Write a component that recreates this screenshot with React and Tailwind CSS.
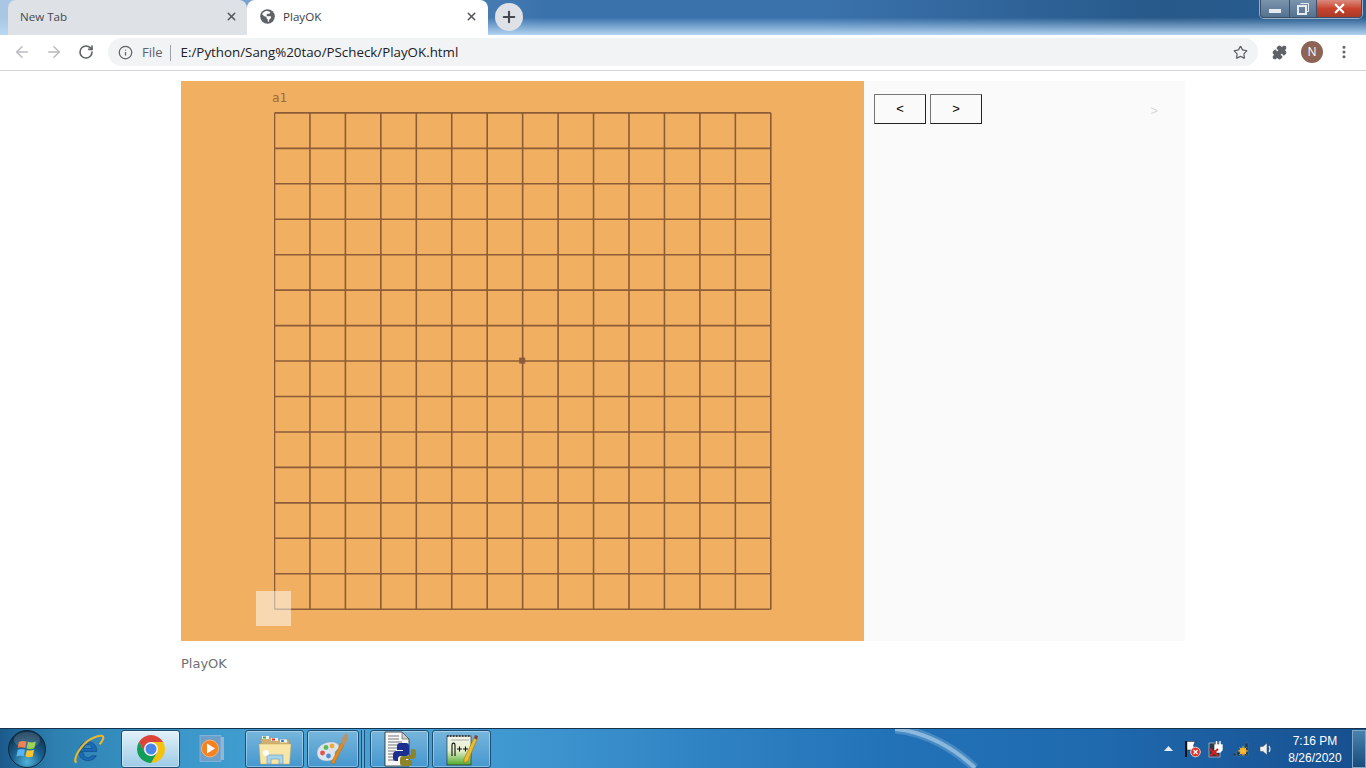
import { ArrowLeft, ArrowRight, RotateCw, Info, Star, Puzzle, X, Plus, EllipsisVertical } from 'lucide-react'

const steps = Array.from({ length: 15 }, (_, i) => i * 35.45)

function Board() {
  return (
    <svg width="498" height="498" className="block">
      {steps.map((s) => (
        <g key={s} stroke="#8c5c38" strokeWidth="1.6">
          <line x1={0.5 + s} y1="0.9" x2={0.5 + s} y2="497.2" />
          <line x1="0.5" y1={0.9 + s} x2="496.8" y2={0.9 + s} />
        </g>
      ))}
      <rect x="245.2" y="245.6" width="6" height="6" fill="#8c5c38" />
    </svg>
  )
}

function GlobeIcon() {
  return (
    <svg width="15" height="15" viewBox="0 0 15 15" className="mr-[8px]">
      <circle cx="7.500" cy="7.500" r="7.300" fill="#5f6368" />
      <path d="M6.700 1.800 4.200 2.800 2 5l2.200 2.300 2.300.4v1.500l1.300 1.200v2.300l1.300-.2V10.800L11 9V7.300H7.500L6.300 6l1.200-1.300h2L10.500 3z" fill="#fff" />
    </svg>
  )
}

function ChromeIcon() {
  return (
    <svg width="30" height="30" viewBox="0 0 30 30">
      <path d="M2.900 8A14 14 0 0 1 27.100 8H15L9 18.500z" fill="#db4437" />
      <path d="M27.100 8A14 14 0 0 1 15 29L21 18.500 15 8z" fill="#f4c20d" />
      <path d="M15 29A14 14 0 0 1 2.900 8L9 18.500H21z" fill="#0f9d58" />
      <circle cx="15" cy="15" r="7" fill="#f4f6f8" />
      <circle cx="15" cy="15" r="5.500" fill="#4a85e8" />
    </svg>
  )
}

function WinOrb() {
  return (
    <svg width="38" height="38" viewBox="0 0 38 38">
      <defs>
        <radialGradient id="orb" cx="50%" cy="85%" r="75%">
          <stop offset="0%" stopColor="#4fb3d9" />
          <stop offset="55%" stopColor="#1c5f8c" />
          <stop offset="100%" stopColor="#0e3350" />
        </radialGradient>
      </defs>
      <circle cx="19" cy="19" r="18.500" fill="url(#orb)" stroke="#0b2a42" />
      <path d="M11 12q3.500-1.800 7.500-.5l-1.300 6.500q-4-1.400-7.700.3z" fill="#ef6a2f" />
      <path d="M20 11.800q3.500 1.500 7.700-.3l-1.300 6.800q-4 1.600-7.700.2z" fill="#8ecb3a" />
      <path d="M9.700 19.800q3.800-1.600 7.300-.2l-1.300 6.700q-3.700-1.400-7.300.3z" fill="#58b4ee" />
      <path d="M18.800 20q3.500 1.300 7.300-.2l-1.300 6.700q-3.800 1.500-7.300.1z" fill="#fbc52e" />
      <ellipse cx="19" cy="10" rx="13" ry="8" fill="#fff" opacity="0.16" />
    </svg>
  )
}

function IeIcon() {
  return (
    <svg width="34" height="34" viewBox="0 0 34 34">
      <path d="M5 19.500h19.500C24.500 13 20.500 9.500 15.500 9.500 9.500 9.500 6 14.500 6 19.500c0 5.500 4 9.500 9.500 9.500 4 0 7-1.800 8.500-5h-5c-.9 1.300-2 2-3.500 2-2.800 0-4.500-2-4.700-5zM10.800 16.500c.4-2.400 2.200-4 4.700-4 2.300 0 4 1.500 4.200 4z" fill="#1a6ab8" stroke="#0b3a6e" strokeWidth="0.5" />
      <path d="M3.500 31C-1 28.500 8 12 19 6.500c8-4 13.500-4.500 12 0-.7 2-2 4-3.500 5.500" fill="none" stroke="#ecb62b" strokeWidth="2.200" />
    </svg>
  )
}

function MediaIcon() {
  return (
    <svg width="30" height="30" viewBox="0 0 30 30">
      <rect x="11" y="3" width="15" height="23" fill="#8fb6d2" />
      <rect x="2" y="1.500" width="21" height="26" fill="#6c9fca" stroke="#9cc0dc" strokeWidth="0.6" />
      <circle cx="12" cy="14.500" r="8.500" fill="#f58220" stroke="#f5b47c" />
      <path d="M9 9.500 17 14.500 9 19.500z" fill="#fff" />
    </svg>
  )
}

function FolderIcon() {
  return (
    <svg width="34" height="32" viewBox="0 0 34 32">
      <path d="M3 5h11l2 2h15v10H3z" fill="#cfb070" stroke="#a98c50" strokeWidth="0.5" />
      <rect x="4" y="3" width="7" height="3" fill="#f4f4f4" />
      <rect x="5" y="3.500" width="3" height="2" fill="#3fae49" />
      <rect x="13" y="5" width="7" height="3" fill="#f4f4f4" />
      <rect x="14" y="5.500" width="3" height="2" fill="#d9342b" />
      <rect x="22" y="6.500" width="7" height="3" fill="#f4f4f4" />
      <rect x="23" y="7" width="3" height="2" fill="#2d8fdd" />
      <path d="M1 11h32l-1.500 20H2.500z" fill="#f7e6a8" stroke="#c9a95c" strokeWidth="0.5" />
      <path d="M9 31v-9h16v9h-4v-5h-8v5z" fill="#a8d4ea" stroke="#5f97bc" strokeWidth="0.6" />
      <circle cx="8" cy="20" r="3" fill="#fff" opacity="0.9" />
    </svg>
  )
}

function PaletteIcon() {
  return (
    <svg width="34" height="34" viewBox="0 0 34 34">
      <path d="M1 21c0-6 6-11 14-11 5 0 8 2 8 5 0 3-4 3-4 6 0 2 2 3 0 5-2 2-5 3-8 3-6 0-10-3-10-8z" fill="#dde5ec" stroke="#93a3b0" strokeWidth="0.5" />
      <circle cx="6.500" cy="21" r="2.400" fill="#e0544c" />
      <circle cx="10" cy="15.500" r="2.400" fill="#5cb85c" />
      <circle cx="16" cy="14" r="2.400" fill="#f0a93e" />
      <circle cx="12.500" cy="24" r="2.400" fill="#4a90d9" />
      <path d="M15 31 25 11l3 1.500L18 32z" fill="#e88a1a" stroke="#a85f10" strokeWidth="0.4" />
      <path d="M25 11 27 4l4-3 1 5-2 5-2 2z" fill="#b89468" />
    </svg>
  )
}

function PythonDocIcon() {
  return (
    <svg width="36" height="36" viewBox="0 0 36 36">
      <path d="M3 1h17l7 7v27H3z" fill="#f8f8f8" stroke="#222" strokeWidth="0.8" />
      <path d="M20 1v7h7z" fill="#cfcfcf" stroke="#333" strokeWidth="0.5" />
      <path d="M6 5h11M6 8h11M6 11h14M6 14h9M6 17h9M6 20h8M6 23h8M6 26h8M6 29h8" stroke="#777" strokeWidth="1" />
      <path d="M18 12h6a3 3 0 0 1 3 3v7a3 3 0 0 1-3 3h-5a3 3 0 0 0-3 3v2h-2a3 3 0 0 1-3-3v-3a4 4 0 0 1 4-4h6v-1h-6v-4a3 3 0 0 1 3-3z" fill="#1b2f8f" />
      <path d="M29 18h2a3 3 0 0 1 3 3v3a4 4 0 0 1-4 4h-6v1h6v4a3 3 0 0 1-3 2h-6a3 3 0 0 1-3-3v-4a3 3 0 0 1 3-3h5a3 3 0 0 0 3-3z" fill="#8c8426" />
    </svg>
  )
}

function NotepadIcon() {
  return (
    <svg width="36" height="36" viewBox="0 0 36 36">
      <defs>
        <linearGradient id="np" x1="0" y1="0" x2="0" y2="1">
          <stop offset="0%" stopColor="#f3f6ea" />
          <stop offset="50%" stopColor="#e6f0cf" />
          <stop offset="100%" stopColor="#4fa82a" />
        </linearGradient>
      </defs>
      <rect x="3" y="5" width="24" height="29" fill="url(#np)" stroke="#333" strokeWidth="0.7" />
      <path d="M3 5h24" stroke="#444" strokeWidth="2" strokeDasharray="1.500 1.500" />
      <path d="M7 9h18" stroke="#999" strokeWidth="0.8" />
      <path d="M8 25V14c0-2.500 3-2.500 3 0v11" fill="none" stroke="#111" strokeWidth="1.100" />
      <path d="M13 18h5m-2.500-2.500v5M19 18h5m-2.500-2.500v5" stroke="#111" strokeWidth="1.100" />
      <path d="M20 28 30 7l3 1.500-9 21.500-4 2z" fill="#eebc2c" stroke="#8a6a12" strokeWidth="0.5" />
      <path d="M30 7l1-3 3 1-1 3.500z" fill="#8f3b3b" />
    </svg>
  )
}

function TaskButton({ w, active, children }) {
  return (
    <div
      className={`flex h-[38px] items-center justify-center rounded-[3px] border border-[#1f4f72] shadow-[inset_0_0_0_1px_rgba(255,255,255,0.35)] ${w} ${active ? 'bg-gradient-to-b from-[#e2f1f9] to-[#9ccbe6]' : 'bg-gradient-to-b from-[#76b6dc] to-[#4497cf]'}`}
    >
      {children}
    </div>
  )
}

export default function App() {
  return (
    <div className="flex h-[768px] w-[1366px] flex-col overflow-hidden bg-white font-['Open_Sans',sans-serif]">
      {/* tab strip */}
      <div className="relative flex h-[35px] shrink-0 items-end bg-[linear-gradient(180deg,transparent_50%,rgba(185,217,245,0.95)_100%),linear-gradient(90deg,#a9c6e4_0,#a9c6e4_8px,#3a72ac_40%,#3a72ac_60%,#27598a_85%,#2a5e92_100%)] pl-[8px]">
        <div className="flex h-[35px] w-[239px] items-center rounded-t-[8px] bg-[#dee1e6] pb-[2px] pl-[12px] pr-[9px] text-[11.600px] text-[#45494e]">
          <span className="flex-1">New Tab</span>
          <X size={13} strokeWidth={2.8} className="text-[#55585c]" />
        </div>
        <div className="flex h-[35px] w-[241px] items-center rounded-t-[8px] bg-white pb-[2px] pl-[13px] pr-[10px] text-[11.600px] text-[#3c4043]">
          <GlobeIcon />
          <span className="flex-1">PlayOK</span>
          <X size={13} strokeWidth={2.8} className="text-[#55585c]" />
        </div>
        <div className="mb-[4px] ml-[7px] flex h-[28px] w-[28px] items-center justify-center rounded-full bg-[#dee1e6]">
          <Plus size={18} strokeWidth={2.8} className="text-[#45494e]" />
        </div>
        {/* window controls */}
        <div className="absolute right-[4px] top-0 flex h-[18px] w-[102px] overflow-hidden rounded-b-[4px] border border-t-0 border-[#3c4f66] shadow-[0_0_0_1px_rgba(255,255,255,0.5)]">
          <div className="flex w-[29px] items-end justify-center border-r border-[#3c4f66] bg-gradient-to-b from-[#7b93ad] to-[#54728f] pb-[4px]">
            <div className="h-[4px] w-[12px] bg-[#e6ebf0]" />
          </div>
          <div className="flex w-[27px] items-center justify-center border-r border-[#3c4f66] bg-gradient-to-b from-[#7b93ad] to-[#54728f]">
            <svg width="12" height="12" viewBox="0 0 12 12">
              <path d="M3.500.5h8v8h-2" fill="none" stroke="#e6ebf0" />
              <rect x="1" y="3" width="8" height="8" fill="none" stroke="#e6ebf0" strokeWidth="2" />
            </svg>
          </div>
          <div className="flex flex-1 items-center justify-center bg-gradient-to-b from-[#d98a7e] via-[#c9432d] to-[#a83a2a]">
            <X size={15} strokeWidth={3.6} className="text-white" />
          </div>
        </div>
      </div>

      {/* toolbar */}
      <div className="flex h-[36px] shrink-0 items-center border-b border-[#d3d4d6] pb-[1px] pl-[13px] pr-[12px]">
        <ArrowLeft size={18} strokeWidth={2} className="text-[#b9bbbe]" />
        <ArrowRight size={18} strokeWidth={2} className="ml-[14px] text-[#b9bbbe]" />
        <RotateCw size={16} strokeWidth={2.4} className="ml-[15px] text-[#5f6368]" />
        <div className="ml-[14px] flex h-[28px] w-[1150px] items-center rounded-full bg-[#f1f3f4] pl-[10px] pr-[10px] pt-[1px]">
          <Info size={15} strokeWidth={2} className="text-[#5f6368]" />
          <span className="ml-[9px] text-[13px] text-[#5f6368]">File</span>
          <span className="ml-[7px] h-[16px] w-px bg-[#9aa0a6]" />
          <span className="ml-[10px] flex-1 text-[13.330px] text-[#202124]">E:/Python/Sang%20tao/PScheck/PlayOK.html</span>
          <Star size={15} strokeWidth={2} className="text-[#5f6368]" />
        </div>
        <Puzzle size={15} strokeWidth={2} fill="#5f6368" className="ml-[14px] text-[#5f6368]" />
        <div className="ml-[14px] flex h-[22px] w-[22px] items-center justify-center rounded-full bg-[#8d6354] text-[12px] text-white">N</div>
        <EllipsisVertical size={16} strokeWidth={2.6} className="ml-[13px] text-[#5f6368]" />
      </div>

      {/* page */}
      <div className="flex-1 pl-[181px] pt-[10px]">
        <div className="flex h-[560px] w-[1004px]">
          <div className="relative h-[560px] w-[683px] bg-[#f1b061] pl-[93px] pt-[31px]">
            <span className="absolute left-[91px] top-[9px] font-['DejaVu_Sans_Mono',monospace] text-[12.500px] leading-[16px] text-[#9c6a3c]">a1</span>
            <Board />
            <div className="absolute left-[75px] top-[510px] h-[35px] w-[35px] bg-white/50" />
          </div>
          <div className="flex flex-1 items-start bg-[#fafafa] pl-[10px] pr-[27px] pt-[13px]">
            <button className="h-[30px] w-[52px] border border-b-[#222] border-l-[#767676] border-r-[#222] border-t-[#767676] font-['Liberation_Sans',sans-serif] text-[13px] text-black">&lt;</button>
            <button className="ml-[4px] h-[30px] w-[52px] border border-b-[#222] border-l-[#767676] border-r-[#222] border-t-[#767676] font-['Liberation_Sans',sans-serif] text-[13px] text-black">&gt;</button>
            <span className="ml-auto mt-[8px] font-['Liberation_Sans',sans-serif] text-[13px] leading-[18px] text-[#d8d8d8]">&gt;</span>
          </div>
        </div>
        <p className="mt-[14px] font-['DejaVu_Sans',sans-serif] text-[13px] leading-[18px] text-[#707070]">PlayOK</p>
      </div>

      {/* taskbar */}
      <div className="relative flex h-[40px] shrink-0 items-center border-t border-[#16334d] bg-[linear-gradient(90deg,#1c5a8c_0%,#2d80b0_4%,#3a96c8_12%,#48a3d6_25%,#3f97d0_38%,#2f82c2_52%,#2272b8_65%,#1f6aaf_80%,#174f8e_100%)] pl-[8px]">
        <div className="absolute left-[895px] top-0 h-[39px] w-[90px] overflow-hidden">
          <svg width="90" height="39">
            <path d="M0 0C32 3 60 20 80 39" fill="none" stroke="#cfe6f5" strokeWidth="9" opacity="0.22" />
            <path d="M0 0C32 3 60 20 80 39" fill="none" stroke="#dff0fa" strokeWidth="4" opacity="0.45" />
          </svg>
        </div>
        <WinOrb />
        <div className="ml-[27px] mr-[15px] flex w-[33px] justify-center">
          <IeIcon />
        </div>
        <TaskButton w="w-[59px]" active>
          <ChromeIcon />
        </TaskButton>
        <div className="flex w-[65px] justify-center">
          <MediaIcon />
        </div>
        <TaskButton w="w-[59px]">
          <FolderIcon />
        </TaskButton>
        <div className="ml-[3px]">
          <TaskButton w="w-[52px]">
            <PaletteIcon />
          </TaskButton>
        </div>
        <div className="ml-[2px] mr-[5px] h-[38px] w-[4px] border-x border-[#1f4f72] bg-[#5aa8d8]" />
        <TaskButton w="w-[59px]">
          <PythonDocIcon />
        </TaskButton>
        <div className="ml-[3px]">
          <TaskButton w="w-[59px]">
            <NotepadIcon />
          </TaskButton>
        </div>

        {/* tray */}
        <div className="ml-auto flex items-center">
          <svg width="9" height="5" viewBox="0 0 9 5" className="mr-[11px]"><path d="M4.500 0 9 5H0z" fill="#e8eef3" /></svg>
          <svg width="17" height="18" viewBox="0 0 17 18" className="mr-[7px]">
            <path d="M2 1v16" stroke="#111" strokeWidth="2" />
            <path d="M3 1.500h8l-1.500 4L11 10H3z" fill="#fff" stroke="#222" strokeWidth="0.5" />
            <circle cx="11.500" cy="12" r="4.800" fill="#d9342b" stroke="#f3c9c6" />
            <path d="M9.500 10l4 4m0-4-4 4" stroke="#fff" strokeWidth="1.200" />
          </svg>
          <svg width="17" height="18" viewBox="0 0 17 18" className="mr-[8px]">
            <rect x="1" y="3" width="11" height="14" fill="#2e3b44" stroke="#ddd" strokeWidth="0.6" />
            <path d="M7 5h7v5l-2 2H9l-2-2zM8.500 1v4M12 1v4" fill="#fff" stroke="#fff" strokeWidth="1.300" />
            <path d="M2 9l8 7m0-7-8 7" stroke="#e01b1b" strokeWidth="2" />
          </svg>
          <svg width="18" height="16" viewBox="0 0 18 16" className="mr-[8px]">
            <path d="M0 12h3v3H0zM4 10h3v5H4zM8 6h3v9H8zM12 2h3v13h-3z" fill="#1d3a52" stroke="#5d7e97" strokeWidth="0.4" />
            <circle cx="10" cy="10" r="3.500" fill="#f6a81c" />
            <path d="M10 5v10M5 10h10M6.500 6.500l7 7m0-7-7 7" stroke="#f6c44c" strokeWidth="0.8" />
          </svg>
          <svg width="14" height="16" viewBox="0 0 14 16">
            <path d="M1 5.500h3L8 2v12L4 10.500H1z" fill="#f1f1f1" stroke="#2b4a63" strokeWidth="0.5" />
            <path d="M10 5q2 3 0 6" fill="none" stroke="#e3e8ec" strokeWidth="1.200" />
          </svg>
        </div>
        <div className="mr-[1px] ml-[6px] w-[72px] pt-[2px] text-center font-['Liberation_Sans',sans-serif] text-[12px] leading-[17px] text-white">
          <div>7:16 PM</div>
          <div>8/26/2020</div>
        </div>
        <div className="h-[38px] w-[14px] border border-[#7fa9c9] bg-gradient-to-b from-[#4a82ad] to-[#174c7c]" />
      </div>
    </div>
  )
}
